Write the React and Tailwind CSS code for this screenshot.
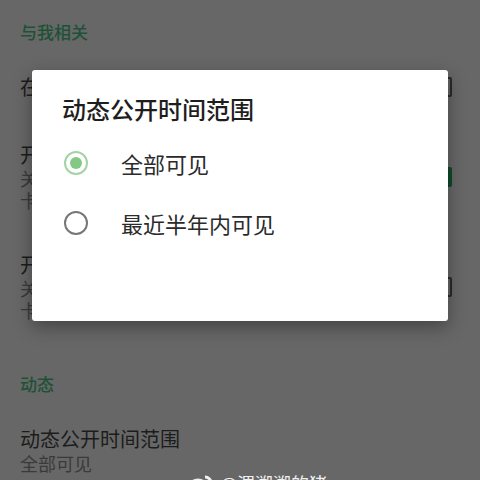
import React from "react";

const font = { fontFamily: '"Noto Sans CJK SC", "Noto Sans", sans-serif' };

function Checkbox({ checked }) {
  return checked ? (
    <div className="w-[18px] h-[20px] rounded-[2px] bg-[#0f4a2c]" />
  ) : (
    <div className="w-[18px] h-[20px] rounded-[2px] border-2 border-[#2a2a2a]" />
  );
}

function Radio({ checked }) {
  return checked ? (
    <div className="w-[24px] h-[24px] rounded-full border-[2.5px] border-[#a3d4a5] flex items-center justify-center">
      <div className="w-[12px] h-[12px] rounded-full bg-[#84c886]" />
    </div>
  ) : (
    <div className="w-[24px] h-[24px] rounded-full border-[2.5px] border-[#777777]" />
  );
}

export default function App() {
  return (
    <div className="relative w-[480px] h-[480px] overflow-hidden bg-[#676767]" style={font}>
      {/* settings list, dimmed behind the dialog */}
      <div className="flex flex-col pl-[20px] pr-[28px]">
        <div className="mt-[20px] h-[24px] text-[17px] leading-[24px] font-medium text-[#1d5236]">与我相关</div>

        <div className="mt-[31px] flex items-center justify-between h-[24px]">
          <div className="text-[20px] leading-[24px] text-[#1c1c1c]">在个人主页展示我的动态</div>
          <Checkbox />
        </div>

        <div className="mt-[44px] flex items-center justify-between">
          <div className="flex flex-col">
            <div className="text-[20px] leading-[24px] text-[#1c1c1c]">开启动态更新提醒</div>
            <div className="text-[18px] leading-[22px] text-[#3a3a3a]">关闭后，好友发布新动态时</div>
            <div className="text-[18px] leading-[22px] text-[#3a3a3a]">卡片上不再显示红点提醒</div>
          </div>
          <Checkbox checked />
        </div>

        <div className="mt-[42px] flex items-center justify-between">
          <div className="flex flex-col">
            <div className="text-[20px] leading-[24px] text-[#1c1c1c]">开启动态点赞提醒</div>
            <div className="text-[18px] leading-[22px] text-[#3a3a3a]">关闭后，好友点赞你的动态时</div>
            <div className="text-[18px] leading-[22px] text-[#3a3a3a]">卡片上不再显示红点提醒</div>
          </div>
          <Checkbox />
        </div>

        <div className="mt-[51px] h-[24px] text-[17px] leading-[24px] font-medium text-[#1d5236]">动态</div>

        <div className="mt-[31px] flex flex-col">
          <div className="text-[20px] leading-[24px] text-[#1c1c1c]">动态公开时间范围</div>
          <div className="text-[18px] leading-[24px] text-[#3a3a3a]">全部可见</div>
        </div>
      </div>

      {/* watermark */}
      <div className="absolute left-[188px] top-[472px] flex items-center gap-[6px] text-[#f0f0f0]">
        <svg width="26" height="20" viewBox="0 0 26 20" fill="none" stroke="#f0f0f0" strokeWidth="3">
          <ellipse cx="10" cy="13" rx="8" ry="6" />
          <path d="M17 4 a6 6 0 0 1 6 6" />
        </svg>
        <span className="text-[18px] leading-[22px]">@渭溯溯的猪</span>
      </div>

      {/* dialog */}
      <div className="absolute left-[32px] top-[70px] w-[416px] h-[251px] bg-white rounded-[3px] shadow-[0_6px_18px_rgba(0,0,0,0.35)] flex flex-col pl-[30px]">
        <div className="mt-[23px] text-[24px] leading-[32px] font-medium text-[#1e1e1e]">动态公开时间范围</div>
        <div className="mt-[23px] flex items-center h-[30px]">
          <div className="ml-[2px]"><Radio checked /></div>
          <div className="ml-[33px] text-[22px] leading-[30px] text-[#2b2b2b]">全部可见</div>
        </div>
        <div className="mt-[30px] flex items-center h-[30px]">
          <div className="ml-[2px]"><Radio /></div>
          <div className="ml-[33px] text-[22px] leading-[30px] text-[#2b2b2b]">最近半年内可见</div>
        </div>
      </div>
    </div>
  );
}
